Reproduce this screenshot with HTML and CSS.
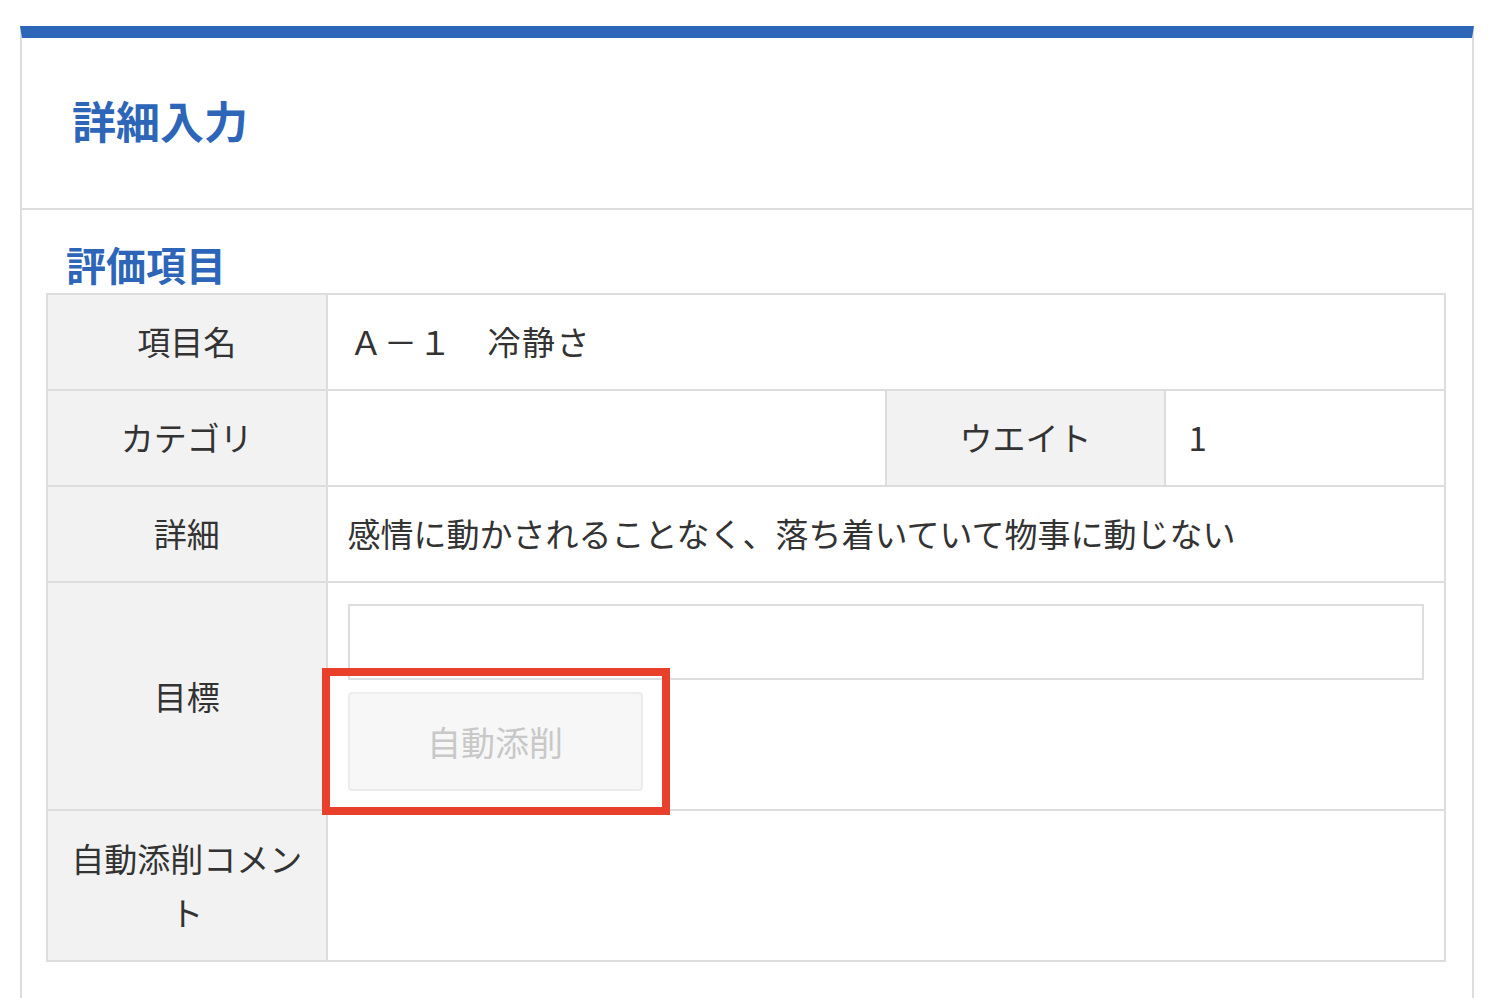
FILE: index.html
```html
<!DOCTYPE html>
<html lang="ja">
<head>
<meta charset="utf-8">
<title>詳細入力</title>
<link rel="stylesheet" href="styles.css">
</head>
<body>
<div class="card">
  <div class="card-header">
    <h1 class="card-title">詳細入力</h1>
  </div>
  <div class="card-body">
    <h2 class="section-title">評価項目</h2>
    <table class="detail-table">
      <colgroup>
        <col class="c1"><col class="c2"><col class="c3"><col class="c4">
      </colgroup>
      <tr class="row-std">
        <th>項目名</th>
        <td colspan="3" class="item-name">Ａ－１　冷静さ</td>
      </tr>
      <tr class="row-std">
        <th>カテゴリ</th>
        <td></td>
        <th>ウエイト</th>
        <td class="weight">1</td>
      </tr>
      <tr class="row-std">
        <th>詳細</th>
        <td colspan="3">感情に動かされることなく、落ち着いていて物事に動じない</td>
      </tr>
      <tr class="row-goal">
        <th>目標</th>
        <td colspan="3" class="goal-cell">
          <div class="goal-input"></div>
          <div class="btn-wrap">
            <button class="btn-auto" disabled>自動添削</button>
            <span class="highlight"></span>
          </div>
        </td>
      </tr>
      <tr class="row-comment">
        <th>自動添削コメント</th>
        <td colspan="3"></td>
      </tr>
    </table>
  </div>
</div>
</body>
</html>
```
FILE: styles.css
```css
html, body {
  margin: 0;
  padding: 0;
  background: #ffffff;
}
body {
  padding: 26px 22px 0 20px;
  font-family: "Noto Sans CJK JP", "Noto Sans", sans-serif;
  color: #333333;
}
.card {
  border-top: 12px solid #2d66b9;
  border-left: 2px solid #dddddd;
  border-right: 2px solid #dddddd;
  min-height: 1000px;
  box-sizing: border-box;
}
.card-header {
  height: 172px;
  border-bottom: 2px solid #dddddd;
  display: flex;
  align-items: center;
  padding-left: 50px;
  padding-bottom: 6px;
  box-sizing: border-box;
}
.card-title {
  margin: 0;
  font-size: 44px;
  font-weight: 700;
  color: #2d66b9;
  line-height: 1;
}
.card-body {
  padding: 29px 26px 0 24px;
}
.section-title {
  margin: 0 0 4px 0;
  padding-left: 20px;
  font-size: 40px;
  line-height: 50px;
  font-weight: 700;
  color: #2d66b9;
}
.detail-table {
  width: 1400px;
  border-collapse: collapse;
  table-layout: fixed;
  font-size: 33px;
}
.c1, .c3, .c4 { width: 20%; }
.c2 { width: 40%; }
.detail-table th,
.detail-table td {
  border: 2px solid #dddddd;
  padding: 0 20px;
}
.detail-table th {
  background: #f2f2f2;
  font-weight: 400;
  text-align: center;
  color: #333333;
}
.detail-table td {
  text-align: left;
  background: #ffffff;
}
.detail-table td.item-name {
  letter-spacing: 1.5px;
  padding-left: 22px;
}
.detail-table td.weight {
  padding-left: 22px;
}
.row-std { height: 96px; }
.row-std th, .row-std td { padding-bottom: 3px; }
.row-goal { height: 228px; }
.row-comment { height: 151px; }
.detail-table .row-comment th {
  line-height: 54px;
  padding: 0 22px 2px 22px;
}
.detail-table .goal-cell {
  padding: 21px 20px 15px 20px;
  vertical-align: top;
}
.goal-input {
  height: 72px;
  border: 2px solid #dddddd;
  background: #ffffff;
}
.btn-wrap {
  position: relative;
  display: inline-block;
  margin-top: 12px;
  vertical-align: top;
}
.btn-auto {
  display: block;
  width: 295px;
  height: 99px;
  box-sizing: border-box;
  background: #f7f7f7;
  border: 2px solid #ececec;
  border-radius: 4px;
  color: #c8c8c8;
  font-family: "Noto Sans CJK JP", "Noto Sans", sans-serif;
  font-size: 34px;
  padding: 0;
}
.highlight {
  position: absolute;
  left: -26px;
  right: -27px;
  top: -24px;
  bottom: -24px;
  border: 8px solid #e8402a;
  pointer-events: none;
}
```
